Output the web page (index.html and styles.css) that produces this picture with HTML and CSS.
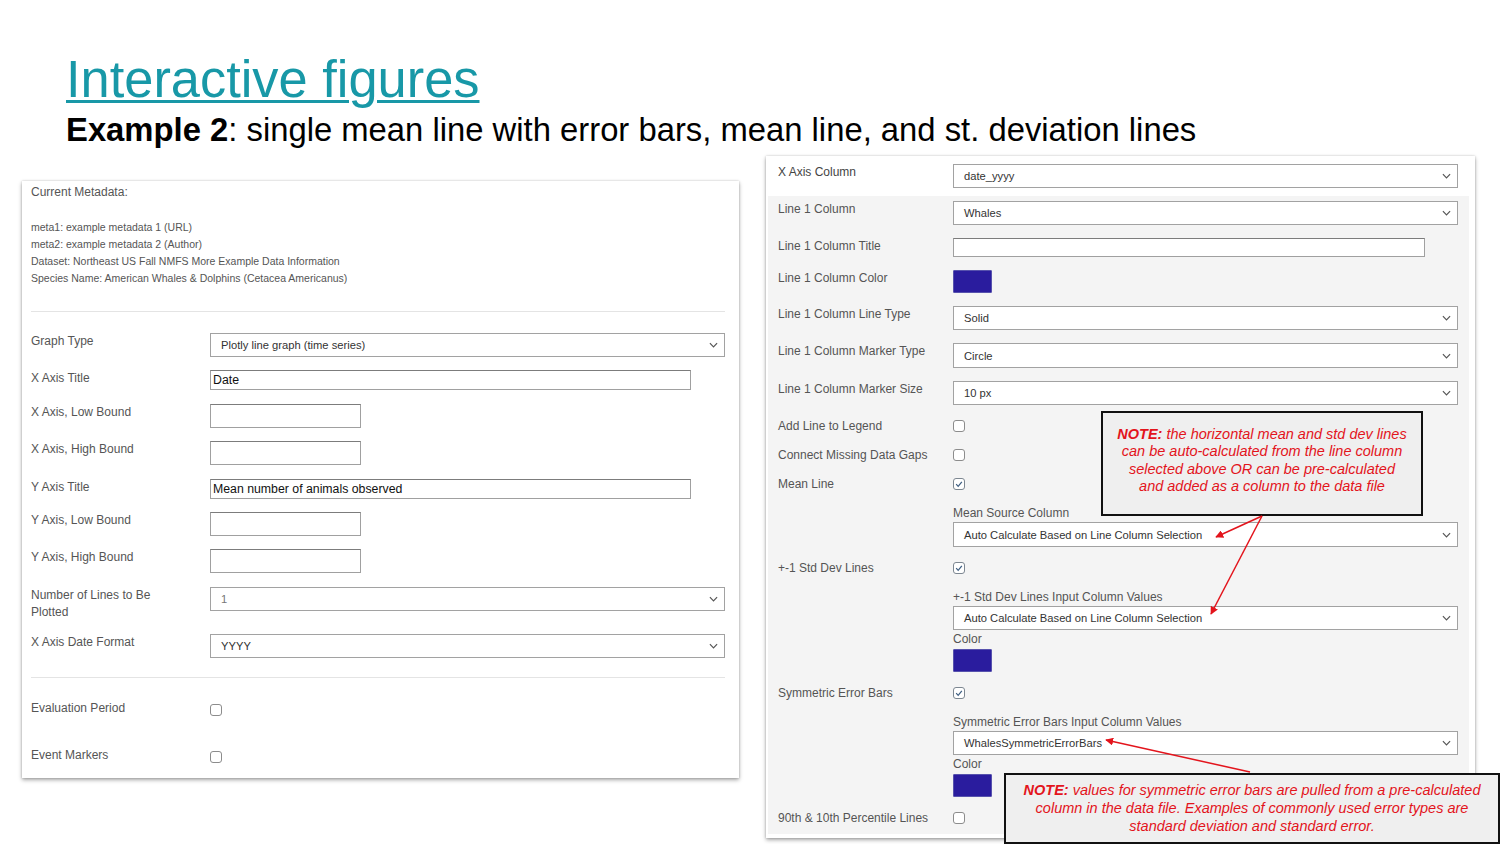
FILE: index.html
```html
<!DOCTYPE html>
<html lang="en">
<head>
<meta charset="utf-8">
<title>Interactive figures</title>
<link rel="stylesheet" href="styles.css">
</head>
<body>
<div class="slide">
  <header class="head">
    <h1 class="title"><a class="title-link">Interactive figures</a></h1>
    <p class="subtitle"><b>Example 2</b>: single mean line with error bars, mean line, and st. deviation lines</p>
  </header>

  <div class="panels">
    <section class="card left">
      <div class="meta-head">Current Metadata:</div>
      <div class="meta-list">
        <div>meta1: example metadata 1 (URL)</div>
        <div>meta2: example metadata 2 (Author)</div>
        <div>Dataset: Northeast US Fall NMFS More Example Data Information</div>
        <div>Species Name: American Whales &amp; Dolphins (Cetacea Americanus)</div>
      </div>
      <div class="divider"></div>
      <div class="form">
        <div class="row"><div class="lbl">Graph Type</div><div class="sel"><span>Plotly line graph (time series)</span><svg class="chev" viewBox="0 0 10 6"><path d="M1 1l4 4 4-4"/></svg></div></div>
        <div class="row"><div class="lbl">X Axis Title</div><div class="txt wide">Date</div></div>
        <div class="row"><div class="lbl">X Axis, Low Bound</div><div class="txt small"></div></div>
        <div class="row"><div class="lbl">X Axis, High Bound</div><div class="txt small"></div></div>
        <div class="row"><div class="lbl">Y Axis Title</div><div class="txt wide">Mean number of animals observed</div></div>
        <div class="row"><div class="lbl">Y Axis, Low Bound</div><div class="txt small"></div></div>
        <div class="row"><div class="lbl">Y Axis, High Bound</div><div class="txt small"></div></div>
        <div class="row"><div class="lbl">Number of Lines to Be<br>Plotted</div><div class="sel"><span class="muted">1</span><svg class="chev" viewBox="0 0 10 6"><path d="M1 1l4 4 4-4"/></svg></div></div>
        <div class="row"><div class="lbl">X Axis Date Format</div><div class="sel"><span>YYYY</span><svg class="chev" viewBox="0 0 10 6"><path d="M1 1l4 4 4-4"/></svg></div></div>
      </div>
      <div class="divider second"></div>
      <div class="checks">
        <div class="row"><div class="lbl">Evaluation Period</div><div class="cbcell"><span class="cb"></span></div></div>
        <div class="row"><div class="lbl">Event Markers</div><div class="cbcell"><span class="cb"></span></div></div>
      </div>
    </section>

    <section class="card right">
      <div class="toprow rrow">
        <div class="lbl dark">X Axis Column</div>
        <div class="sel"><span>date_yyyy</span><svg class="chev" viewBox="0 0 10 6"><path d="M1 1l4 4 4-4"/></svg></div>
      </div>
      <div class="greybox">
        <div class="rrow"><div class="lbl">Line 1 Column</div><div class="sel"><span>Whales</span><svg class="chev" viewBox="0 0 10 6"><path d="M1 1l4 4 4-4"/></svg></div></div>
        <div class="rrow"><div class="lbl">Line 1 Column Title</div><div><div class="txt title-in"></div></div></div>
        <div class="rrow"><div class="lbl">Line 1 Column Color</div><div><div class="swatch"></div></div></div>
        <div class="rrow"><div class="lbl">Line 1 Column Line Type</div><div class="sel"><span>Solid</span><svg class="chev" viewBox="0 0 10 6"><path d="M1 1l4 4 4-4"/></svg></div></div>
        <div class="rrow"><div class="lbl">Line 1 Column Marker Type</div><div class="sel tall"><span>Circle</span><svg class="chev" viewBox="0 0 10 6"><path d="M1 1l4 4 4-4"/></svg></div></div>
        <div class="rrow"><div class="lbl">Line 1 Column Marker Size</div><div class="sel"><span>10 px</span><svg class="chev" viewBox="0 0 10 6"><path d="M1 1l4 4 4-4"/></svg></div></div>
        <div class="rrow"><div class="lbl">Add Line to Legend</div><div class="cbline"><span class="cb"></span></div></div>
        <div class="rrow"><div class="lbl">Connect Missing Data Gaps</div><div class="cbline"><span class="cb"></span></div></div>
        <div class="rrow">
          <div class="lbl">Mean Line</div>
          <div>
            <div class="cbline"><span class="cb on"><svg viewBox="0 0 12 12"><path d="M2.6 6.2l2.4 2.6 4.4-5.4"/></svg></span></div>
            <div class="sublbl">Mean Source Column</div>
            <div class="sel tall"><span>Auto Calculate Based on Line Column Selection</span><svg class="chev" viewBox="0 0 10 6"><path d="M1 1l4 4 4-4"/></svg></div>
          </div>
        </div>
        <div class="rrow">
          <div class="lbl">+-1 Std Dev Lines</div>
          <div>
            <div class="cbline"><span class="cb on"><svg viewBox="0 0 12 12"><path d="M2.6 6.2l2.4 2.6 4.4-5.4"/></svg></span></div>
            <div class="sublbl">+-1 Std Dev Lines Input Column Values</div>
            <div class="sel"><span>Auto Calculate Based on Line Column Selection</span><svg class="chev" viewBox="0 0 10 6"><path d="M1 1l4 4 4-4"/></svg></div>
            <div class="colorlbl">Color</div>
            <div class="swatch"></div>
          </div>
        </div>
        <div class="rrow">
          <div class="lbl">Symmetric Error Bars</div>
          <div>
            <div class="cbline"><span class="cb on"><svg viewBox="0 0 12 12"><path d="M2.6 6.2l2.4 2.6 4.4-5.4"/></svg></span></div>
            <div class="sublbl">Symmetric Error Bars Input Column Values</div>
            <div class="sel"><span>WhalesSymmetricErrorBars</span><svg class="chev" viewBox="0 0 10 6"><path d="M1 1l4 4 4-4"/></svg></div>
            <div class="colorlbl">Color</div>
            <div class="swatch"></div>
          </div>
        </div>
        <div class="rrow"><div class="lbl">90th &amp; 10th Percentile Lines</div><div class="cbline"><span class="cb"></span></div></div>
      </div>
    </section>
  </div>

  <div class="note note-one">
    <b>NOTE:</b> the horizontal mean and std dev lines<br>
    can be auto-calculated from the line column<br>
    selected above OR can be pre-calculated<br>
    and added as a column to the data file
  </div>
  <div class="note note-two">
    <b>NOTE:</b> values for symmetric error bars are pulled from a pre-calculated<br>
    column in the data file. Examples of commonly used error types are<br>
    standard deviation and standard error.
  </div>

  <svg class="arrows" viewBox="0 0 1500 844" width="1500" height="844">
    <defs>
      <marker id="ah" viewBox="0 0 10 10" refX="9" refY="5" markerWidth="8" markerHeight="8" markerUnits="userSpaceOnUse" orient="auto">
        <path d="M0 0L10 5L0 10z" fill="#e3141c"/>
      </marker>
    </defs>
    <line x1="1262" y1="516" x2="1216" y2="537" stroke="#e3141c" stroke-width="1.5" marker-end="url(#ah)"/>
    <line x1="1262" y1="516" x2="1211" y2="614" stroke="#e3141c" stroke-width="1.5" marker-end="url(#ah)"/>
    <line x1="1250" y1="772" x2="1106" y2="740" stroke="#e3141c" stroke-width="1.5" marker-end="url(#ah)"/>
  </svg>
</div>
</body>
</html>
```

FILE: styles.css
```css
html, body {
  margin: 0;
  padding: 0;
  background: #ffffff;
}

.slide {
  position: relative;
  width: 1500px;
  height: 844px;
  overflow: hidden;
  font-family: "Liberation Sans", Arial, sans-serif;
  color: #000;
}

.head {
  padding: 53px 0 0 66px;
}

.title {
  margin: 0;
  font-size: 52.4px;
  line-height: 52px;
  font-weight: normal;
}

.title-link {
  color: #1898a7;
  text-decoration: underline;
  text-decoration-thickness: 3px;
  text-underline-offset: 3px;
}

.subtitle {
  margin: 9px 0 0 0;
  font-size: 32.8px;
  line-height: 32px;
  white-space: nowrap;
}

.subtitle b {
  font-weight: bold;
}

.panels {
  display: flex;
  align-items: flex-start;
  gap: 27px;
  padding-left: 22px;
  margin-top: 10px;
}

.card {
  background: #fff;
  box-sizing: border-box;
  box-shadow: 0 2px 4px rgba(0, 0, 0, 0.35), 0 0 2px rgba(0, 0, 0, 0.18);
}

/* ---------- left card ---------- */
.left {
  width: 717px;
  margin-top: 25px;
  padding: 3px 14px 14px 9px;
  color: #555;
}

.meta-head {
  font-size: 12px;
  line-height: 16px;
}

.meta-list {
  margin-top: 18.5px;
  font-size: 10.5px;
  line-height: 17px;
}

.divider {
  height: 1px;
  background: #e4e4e4;
  margin-top: 24.5px;
}

.divider.second {
  margin-top: 19px;
}

.form {
  margin-top: 21px;
  display: flex;
  flex-direction: column;
  gap: 13.4px;
}

.row {
  display: grid;
  grid-template-columns: 179px 1fr;
  align-items: start;
}

.lbl {
  font-size: 12px;
  line-height: 17px;
  color: #555;
  white-space: nowrap;
}

.lbl.dark {
  color: #444;
}

.sel {
  height: 24px;
  box-sizing: border-box;
  border: 1px solid #a2a2a2;
  background: #fff;
  display: flex;
  align-items: center;
  justify-content: space-between;
  padding: 0 6px 0 10px;
  font-size: 11.2px;
  color: #333;
  white-space: nowrap;
}

.sel.tall {
  height: 25px;
}

.sel .muted {
  color: #777;
}

.chev {
  width: 9px;
  height: 6px;
  flex: none;
}

.chev path {
  fill: none;
  stroke: #555;
  stroke-width: 1.3;
}

.txt {
  box-sizing: border-box;
  border: 1px solid #a0a0a0;
  border-top-color: #7c7c7c;
  background: #fff;
  display: flex;
  align-items: center;
  padding-left: 2px;
  font-size: 12.3px;
  color: #111;
  white-space: nowrap;
}

.txt.wide {
  width: 481px;
  height: 20px;
}

.txt.small {
  width: 151px;
  height: 24px;
}

.txt.title-in {
  width: 472px;
  height: 19px;
}

.checks {
  margin-top: 21.5px;
  display: flex;
  flex-direction: column;
  gap: 30px;
}

.cbcell {
  padding-top: 4px;
}

.cb {
  display: block;
  width: 12px;
  height: 12px;
  box-sizing: border-box;
  border: 1px solid #8c8c8c;
  border-radius: 3px;
  background: #fff;
}

.cb.on {
  border-color: #7d8791;
}

.cb svg {
  display: block;
  width: 10px;
  height: 10px;
}

.cb svg path {
  fill: none;
  stroke: #3f5f82;
  stroke-width: 1.5;
}

/* ---------- right card ---------- */
.right {
  width: 709px;
  height: 682px;
  padding: 0;
  display: flex;
  flex-direction: column;
}

.rrow {
  display: grid;
  grid-template-columns: 175px 505px;
  align-items: start;
}

.rrow .lbl {
  line-height: 16px;
}

.toprow {
  padding: 8px 17px 8px 12px;
}

.greybox {
  flex: 1;
  margin: 0 6px 4px 2px;
  padding: 5px 11px 8px 10px;
  background: #f4f4f4;
  display: flex;
  flex-direction: column;
  gap: 13px;
}

.swatch {
  width: 39px;
  height: 23px;
  box-sizing: border-box;
  background: #2a1c9e;
  border: 1px solid #5752ad;
  border-radius: 1px;
}

.cbline {
  height: 16px;
  display: flex;
  align-items: center;
}

.sublbl {
  margin-top: 13px;
  margin-bottom: 1px;
  font-size: 12px;
  line-height: 16px;
  color: #555;
  white-space: nowrap;
}

.colorlbl {
  margin-top: 1px;
  margin-bottom: 2px;
  font-size: 12px;
  line-height: 16px;
  color: #555;
}

/* ---------- annotations ---------- */
.note {
  position: absolute;
  box-sizing: border-box;
  background: #efefef;
  border: 2px solid #111;
  color: #e3141c;
  font-style: italic;
  font-size: 14.5px;
  text-align: center;
  white-space: nowrap;
}

.note b {
  font-weight: bold;
}

.note-one {
  left: 1101px;
  top: 411px;
  width: 322px;
  height: 105px;
  padding-top: 13px;
  line-height: 17.4px;
}

.note-two {
  left: 1004px;
  top: 773px;
  width: 496px;
  height: 71px;
  padding-top: 6px;
  line-height: 18px;
}

.arrows {
  position: absolute;
  left: 0;
  top: 0;
  pointer-events: none;
}
```
